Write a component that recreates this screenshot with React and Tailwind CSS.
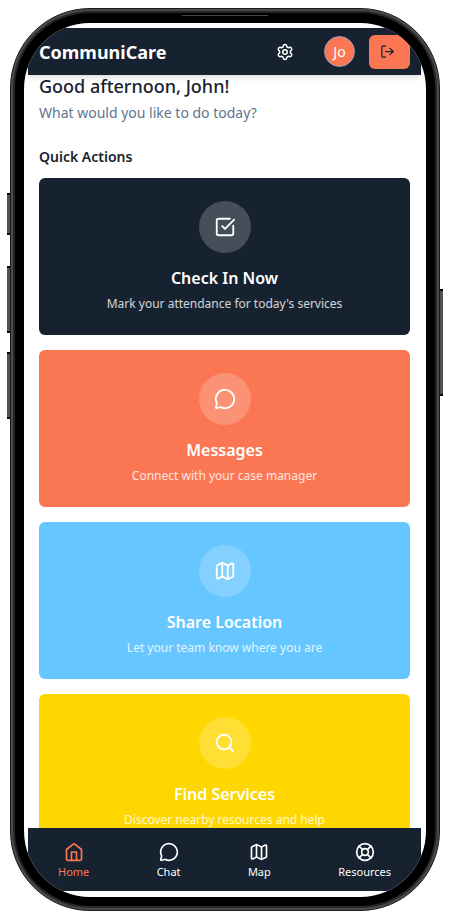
import { Settings, SquareCheckBig, MessageCircle, Map, Search, LifeBuoy, LogOut } from "lucide-react";

function HomeIcon({ size = 24 }) {
  return (
    <svg width={size} height={size} viewBox="0 0 24 24" fill="none" stroke="currentColor" strokeWidth="2" strokeLinecap="round" strokeLinejoin="round" aria-hidden="true">
      <path d="M3 9l9-7 9 7v11a2 2 0 0 1-2 2H5a2 2 0 0 1-2-2z" />
      <polyline points="9 22 9 12 15 12 15 22" />
    </svg>
  );
}

const ACTIONS = [
  { title: "Check In Now", text: "Mark your attendance for today's services", Icon: SquareCheckBig, tone: "bg-[#172230]" },
  { title: "Messages", text: "Connect with your case manager", Icon: MessageCircle, tone: "bg-[#fb7753]" },
  { title: "Share Location", text: "Let your team know where you are", Icon: Map, tone: "bg-[#66c6ff]" },
  { title: "Find Services", text: "Discover nearby resources and help", Icon: Search, tone: "bg-[#ffd700]" },
];

const TABS = [
  { label: "Home", Icon: HomeIcon, tone: "text-[#fb7753]" },
  { label: "Chat", Icon: MessageCircle, tone: "text-white" },
  { label: "Map", Icon: Map, tone: "text-white" },
  { label: "Resources", Icon: LifeBuoy, tone: "text-white" },
];

function SideButton({ place }) {
  return <span className={`absolute w-[4px] border-y-2 border-black bg-[#55524e] ${place}`} />;
}

function Header() {
  return (
    <header className="z-10 flex h-[47px] shrink-0 items-center bg-[#172230] px-[11px] shadow-md">
      <h1 className="mr-auto text-lg font-bold text-white">CommuniCare</h1>
      <button aria-label="Settings" className="mr-[30px] text-white">
        <Settings size={18} />
      </button>
      <button aria-label="Profile" className="mr-[14px] flex size-[31px] items-center justify-center rounded-full border border-slate-400 bg-[#fb7753] pt-px text-sm text-white">
        Jo
      </button>
      <button aria-label="Log out" className="flex h-[34px] w-[41px] items-center justify-center rounded-md bg-[#fb7753] pr-1 text-[#172230]">
        <LogOut size={15} />
      </button>
    </header>
  );
}

function ActionCard({ title, text, Icon, tone }) {
  return (
    <button className={`flex h-[157px] w-full shrink-0 flex-col items-center rounded-md pt-[23px] text-white ${tone}`}>
      <span className="flex size-[52px] items-center justify-center rounded-full bg-white/20">
        <Icon size={22} />
      </span>
      <span className="mt-3 text-base leading-[26px] font-semibold">{title}</span>
      <span className="text-[12px] leading-[26px] text-white/80">{text}</span>
    </button>
  );
}

export default function App() {
  return (
    <div className="flex h-screen justify-center bg-white px-[10px] pt-2 pb-[9px] font-['Noto_Sans','Open_Sans',sans-serif]">
      <div className="relative w-full max-w-[430px]">
        <SideButton place="top-[185px] -left-[3px] h-[42px]" />
        <SideButton place="top-[258px] -left-[3px] h-[67px]" />
        <SideButton place="top-[344px] -left-[3px] h-[67px]" />
        <SideButton place="top-[281px] -right-[3px] h-[107px]" />
        <div className="relative h-full rounded-[80px] border border-[#1c1c1c] bg-[#4a4a4a] p-[2px]">
          <div className="h-full rounded-[77px] bg-[#262626] p-[2px]">
            <div className="relative h-full rounded-[75px] bg-black px-[9px] pt-[10px] pb-[9px]">
              <span className="absolute inset-x-0 top-[2px] mx-auto h-px w-[86px] bg-[#444]" />
              <div className="h-full overflow-hidden rounded-[66px] bg-white pt-[5px] pr-[5px] pb-[6px] pl-[4px]">
                <div className="flex h-full flex-col">
                  <Header />
                  <main className="min-h-0 flex-1 overflow-hidden px-[11px]">
                    <h2 className="text-lg leading-[22px] font-medium text-[#172230]">Good afternoon, John!</h2>
                    <p className="mt-1 text-sm leading-6 text-slate-500">What would you like to do today?</p>
                    <h3 className="mt-5 text-sm leading-6 font-semibold text-[#172230]">Quick Actions</h3>
                    <div className="mt-[9px] flex flex-col gap-[15px]">
                      {ACTIONS.map((a) => (
                        <ActionCard key={a.title} {...a} />
                      ))}
                    </div>
                  </main>
                  <nav className="flex h-[63px] shrink-0 items-center justify-between bg-[#172230] px-[30px] pt-[3px]">
                    {TABS.map(({ label, Icon, tone }) => (
                      <a key={label} href="#" className={`flex flex-col items-center gap-[2px] text-[11px] leading-4 ${tone}`}>
                        <Icon size={20} />
                        {label}
                      </a>
                    ))}
                  </nav>
                </div>
              </div>
            </div>
          </div>
        </div>
      </div>
    </div>
  );
}
